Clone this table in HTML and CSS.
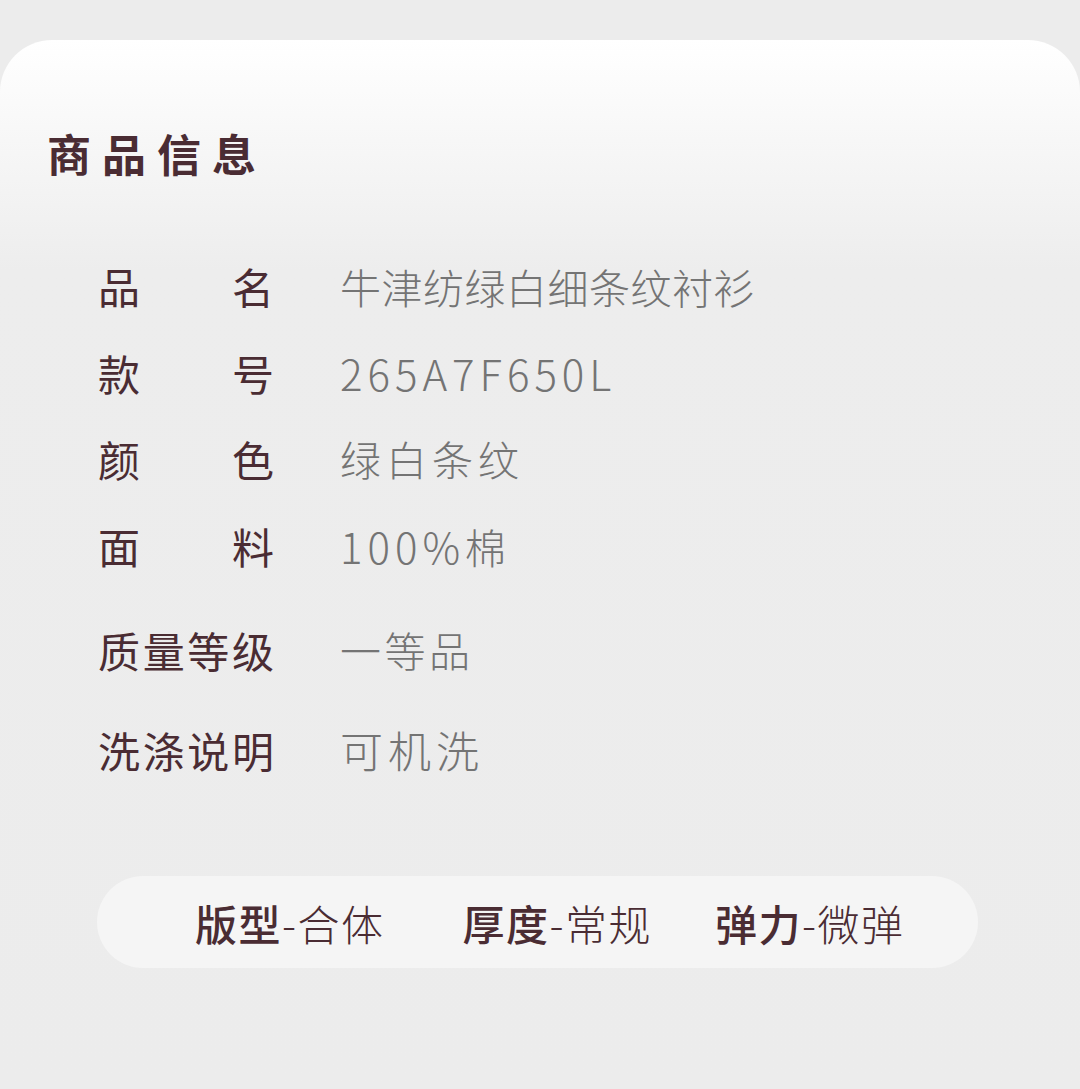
FILE: index.html
```html
<!DOCTYPE html>
<html lang="zh-CN">
  <head>
    <meta charset="UTF-8" />
    <meta name="viewport" content="width=device-width, initial-scale=1.0" />
    <title>商品信息</title>
    <link rel="stylesheet" href="styles.css">
  </head>
  <body>
    <div class="info-card">
      <div class="title">商品信息</div>
      <div class="rows">
        <div class="row"><div class="label">品名</div><div class="value">牛津纺绿白细条纹衬衫</div></div>
        <div class="row"><div class="label">款号</div><div class="value num">265A7F650L</div></div>
        <div class="row short"><div class="label">颜色</div><div class="value wide">绿白条纹</div></div>
        <div class="row long"><div class="label">面料</div><div class="value"><span class="num">100%</span>棉</div></div>
        <div class="row tall first-tall"><div class="label">质量等级</div><div class="value mid">一等品</div></div>
        <div class="row tall"><div class="label">洗涤说明</div><div class="value wider">可机洗</div></div>
      </div>
      <div class="tags">
        <div class="tag"><b>版型</b>-合体</div>
        <div class="tag"><b>厚度</b>-常规</div>
        <div class="tag"><b>弹力</b>-微弹</div>
      </div>
    </div>
  </body>
</html>
```

FILE: styles.css
```css
body {
  margin: 0;
  padding: 0;
  background: #ececec;
  font-family: "Noto Sans CJK SC", "Noto Sans", sans-serif;
  color: #4a2c33;
}
.info-card {
  margin-top: 40px;
  min-height: 1049px;
  border-radius: 52px 52px 0 0;
  background: linear-gradient(#ffffff, #f7f7f7 100px, #ededed 230px, #ececec);
  padding-top: 83px;
  box-sizing: border-box;
}
.title {
  padding-left: 47px;
  font-size: 44px;
  line-height: 60px;
  font-weight: 700;
  letter-spacing: 11px;
}
.rows {
  margin-top: 59px;
  padding-left: 98px;
}
.row {
  height: 87px;
  display: flex;
  align-items: center;
}
.row.short { height: 84px; }
.row.long { height: 90px; }
.row.tall { height: 100px; }
.row.first-tall { margin-top: 9px; }
.label {
  width: 176px;
  font-size: 42px;
  text-align: justify;
  text-align-last: justify;
}
.value {
  margin-left: 66px;
  font-size: 41px;
  font-weight: 300;
  letter-spacing: 0.5px;
  color: #747474;
}
.value.wide { letter-spacing: 5px; }
.value.mid { letter-spacing: 3.5px; }
.value.wider { font-size: 43px; letter-spacing: 5px; }
.num { font-size: 42px; letter-spacing: 5px; }
.tags {
  margin: 77px 102px 0 97px;
  height: 92px;
  border-radius: 46px;
  background: #f5f5f5;
  display: flex;
  align-items: center;
  padding-left: 98px;
}
.tag {
  font-size: 42px;
  font-weight: 300;
  letter-spacing: 1.5px;
}
.tag + .tag { margin-left: 78px; }
.tag:last-child { margin-left: 63px; }
.tag b { font-weight: 500; }
```
